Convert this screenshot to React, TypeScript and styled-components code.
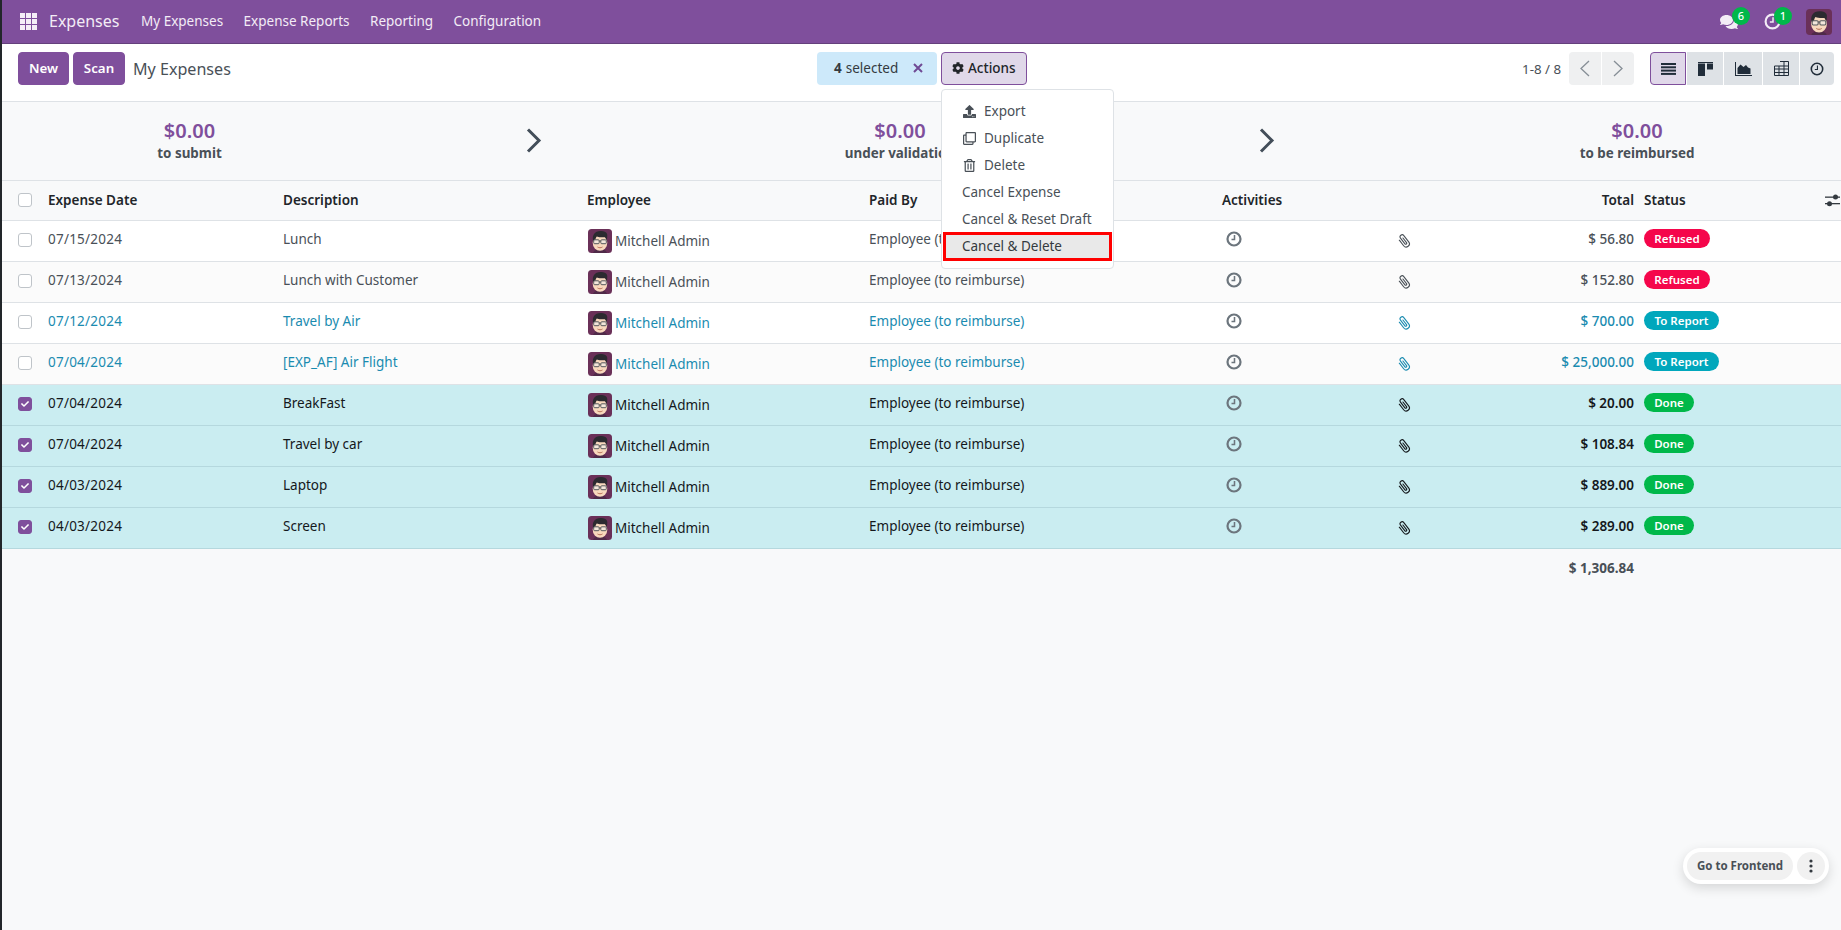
import React from "react";
import styled, { createGlobalStyle } from "styled-components";
import { FaCog, FaUpload, FaRegClone, FaRegTrashAlt, FaComments, FaCheck } from "react-icons/fa";

const Global = createGlobalStyle`
  html, body { margin: 0; padding: 0; background: #22262a; }
  body { font-family: "Noto Sans", "Open Sans", "Liberation Sans", sans-serif; font-size: 13.5px; color: #495057; }
  * { box-sizing: border-box; }
`;

const PURPLE = "#7f4f9c";

const Page = styled.div`
  margin-left: 2px;
  min-height: 930px;
  background: #f8f9fa;
  position: relative;
  overflow: hidden;
`;

const Navbar = styled.header`
  height: 44px;
  background: ${PURPLE};
  border-bottom: 1px solid #64407c;
  display: flex;
  align-items: center;
  padding: 0 9px 0 18px;
  color: #f3ecf6;
`;
const AppsIcon = styled.svg`
  width: 17px;
  height: 17px;
  margin-right: 12px;
  fill: #f5eff8;
`;
const Brand = styled.span`
  font-size: 16px;
  width: 92px;
  padding-bottom: 2px;
`;
const NavItem = styled.span`
  font-size: 13.5px;
  margin-right: 20.5px;
  padding-bottom: 2px;
`;
const NavRight = styled.div`
  margin-left: auto;
  display: flex;
  align-items: center;
`;
const NavIcon = styled.div<{ $w: number }>`
  position: relative;
  width: ${(p) => p.$w}px;
  height: 18px;
  display: flex;
  align-items: center;
  font-size: 18px;
  color: #f3ecf6;
`;
const CountBadge = styled.span<{ $left: number }>`
  position: absolute;
  top: -6px;
  left: ${(p) => p.$left}px;
  width: 18px;
  height: 18px;
  border-radius: 50%;
  background: #00b84a;
  color: #fff;
  font-size: 11px;
  font-weight: 500;
  display: flex;
  align-items: center;
  justify-content: center;
`;

const ControlPanel = styled.div`
  height: 58px;
  background: #fff;
  border-bottom: 1px solid #dee2e6;
  display: flex;
  align-items: flex-start;
  padding: 8px 7px 0 16px;
`;
const LeftGroup = styled.div`
  width: 799px;
  display: flex;
  align-items: center;
`;
const PrimaryButton = styled.button<{ $w: number }>`
  height: 33px;
  width: ${(p) => p.$w}px;
  margin-right: 4px;
  border: 1px solid ${PURPLE};
  border-radius: 4px;
  background: ${PURPLE};
  color: #fff;
  font: 600 13.3px "Noto Sans", sans-serif;
  padding: 0 0 2px;
`;
const PageTitle = styled.span`
  font-size: 16.100px;
  margin-left: 4px;
  color: #495057;
`;
const SelectionBadge = styled.div`
  height: 33px;
  width: 120px;
  background: #cde9fa;
  border-radius: 4px;
  display: flex;
  align-items: center;
  padding: 0 0 2px 17px;
  color: #343a40;
  font-size: 13.5px;
  b { font-weight: 700; margin-right: 4px; }
`;
const CloseMark = styled.svg`
  width: 10px;
  height: 10px;
  margin-left: 15px;
  stroke: #6f4a94;
  stroke-width: 2;
`;
const ActionsWrap = styled.div`
  position: relative;
  margin-left: 4px;
`;
const ActionsButton = styled.button`
  height: 33px;
  width: 86px;
  background: #e0d8e9;
  border: 1px solid ${PURPLE};
  border-radius: 4px;
  color: #212529;
  font: 500 13.5px "Noto Sans", sans-serif;
  display: flex;
  align-items: center;
  gap: 4px;
  padding: 0 0 2px 10px;
`;
const Menu = styled.div`
  position: absolute;
  z-index: 5;
  top: 37px;
  left: 0;
  width: 173px;
  height: 180px;
  background: #fff;
  border: 1px solid #dee2e6;
  border-radius: 4px;
  padding: 7.5px 0;
`;
const MenuItem = styled.div`
  height: 27px;
  display: flex;
  align-items: center;
  gap: 8px;
  font-size: 13.5px;
  color: #495057;
  padding-left: 20px;
  svg { width: 13px; height: 13px; flex: none; margin-left: 1px; }
`;
const HotMenuItem = styled(MenuItem)`
  height: 23px;
  margin: 2px 4px;
  padding-left: 16px;
  color: #343a40;
  background: #e9e9e9;
  outline: 3.5px solid #f00;
`;
const RightGroup = styled.div`
  margin-left: auto;
  display: flex;
  align-items: center;
`;
const PagerText = styled.span`
  font-size: 13.3px;
  margin-right: 8px;
  color: #495057;
`;
const PagerButton = styled.div<{ $first?: boolean }>`
  width: 32px;
  height: 33px;
  background: #eff0f1;
  margin-left: ${(p) => (p.$first ? 0 : "1px")};
  border-radius: ${(p) => (p.$first ? "4px 0 0 4px" : "0 4px 4px 0")};
  display: flex;
  align-items: center;
  justify-content: center;
`;
const ViewSwitch = styled.div`
  display: flex;
  margin-left: 16px;
  gap: 1px;
`;
const ViewButton = styled.div<{ $w: number; $on?: boolean; $end?: boolean }>`
  width: ${(p) => p.$w}px;
  height: 33px;
  background: ${(p) => (p.$on ? "#e0d8e9" : "#dee2e6")};
  border: ${(p) => (p.$on ? `1px solid ${PURPLE}` : "none")};
  border-radius: ${(p) => (p.$on ? "4px 0 0 4px" : p.$end ? "0 4px 4px 0" : "0")};
  display: flex;
  align-items: center;
  justify-content: center;
  color: #212d3a;
`;

const Summary = styled.section`
  height: 79px;
  border-bottom: 1px solid #dee2e6;
  display: grid;
  grid-template-columns: 375px 313px 420px 314px 1fr;
  align-items: center;
`;
const Stat = styled.div<{ $shift?: number }>`
  text-align: center;
  padding-left: ${(p) => p.$shift ?? 0}px;
  padding-bottom: 3px;
`;
const StatValue = styled.div`
  font-size: 20px;
  font-weight: 600;
  line-height: 25px;
  margin-bottom: 1px;
  color: ${PURPLE};
`;
const StatLabel = styled.div`
  font-size: 13.4px;
  font-weight: 700;
  line-height: 18px;
  color: #495057;
`;
const ArrowCell = styled.div`
  display: flex;
  justify-content: center;
  padding-bottom: 1px;
  svg { width: 16px; height: 25px; }
`;

const COLS = "46px 235px 304px 282px 353px 173px 40px 199px 10px 1fr";
const HeaderRow = styled.div`
  height: 40px;
  display: grid;
  grid-template-columns: ${COLS};
  align-items: center;
  border-bottom: 1px solid #dee2e6;
  color: #212529;
  font-weight: 600;
  font-size: 13.5px;
`;
const HeadLabel = styled.span`
  padding-bottom: 2px;
`;
const HeadEnd = styled(HeadLabel)`
  text-align: right;
`;
const Box = styled.span<{ $on?: boolean }>`
  width: 14px;
  height: 14px;
  margin: 0 0 2px 16px;
  border-radius: 3px;
  border: 1px solid ${(p) => (p.$on ? "#7f4f9c" : "#bfc4c9")};
  background: ${(p) => (p.$on ? "#7f4f9c" : "#fff")};
  display: flex;
  align-items: center;
  justify-content: center;
  color: #fff;
  svg { width: 8px; height: 8px; }
`;
const Row = styled.div<{ $tone: string; $even: boolean }>`
  height: 41px;
  display: grid;
  grid-template-columns: ${COLS};
  align-items: center;
  font-size: 13.5px;
  background: ${(p) => (p.$tone === "sel" ? "#caedf1" : p.$even ? "#fbfbfb" : "#fff")};
  border-bottom: 1px solid ${(p) => (p.$tone === "sel" ? "#b5d8de" : "#dee2e6")};
  color: ${(p) => (p.$tone === "sel" ? "#14181c" : p.$tone === "link" ? "#1a8bb0" : "#495057")};
`;
const TextCell = styled.span`
  padding-bottom: 5px;
  white-space: nowrap;
`;
const DateCell = styled(TextCell)`
  letter-spacing: 0.23px;
`;
const TotalCell = styled(TextCell)<{ $strong?: boolean }>`
  text-align: right;
  font-weight: ${(p) => (p.$strong ? 600 : 500)};
`;
const Employee = styled.span`
  display: flex;
  align-items: center;
  gap: 3px;
  padding-left: 1px;
`;
const ActivityCell = styled.span`
  display: flex;
  padding: 0 0 4px 4px;
`;
const ClipCell = styled.span`
  display: flex;
  padding-left: 2px;
`;
const Pill = styled.span<{ $kind: string }>`
  display: inline-flex;
  align-items: center;
  justify-content: center;
  height: 19px;
  margin-bottom: 5px;
  border-radius: 10px;
  color: #fff;
  font-size: 11.5px;
  font-weight: 600;
  vertical-align: middle;
  width: ${(p) => (p.$kind === "Refused" ? 66 : p.$kind === "Done" ? 50 : 75)}px;
  background: ${(p) => (p.$kind === "Refused" ? "#f5064b" : p.$kind === "Done" ? "#00b84a" : "#01a7bc")};
`;
const SliderIcon = styled.svg`
  margin-right: 1px;
  width: 15px;
  height: 13px;
`;
const StatusHead = styled.span`
  display: flex;
  justify-content: space-between;
  align-items: center;
`;
const FooterRow = styled.div`
  display: grid;
  grid-template-columns: ${COLS};
  height: 38px;
  align-items: center;
  font-weight: 700;
  font-size: 13.5px;
  color: #495057;
`;
const FooterTotal = styled.span`
  grid-column: 8;
  text-align: right;
`;

const FloatBar = styled.div`
  position: absolute;
  left: 1681px;
  top: 848px;
  width: 146px;
  height: 36px;
  border-radius: 18px;
  background: #fff;
  box-shadow: 0 4px 12px rgba(0, 0, 0, 0.14);
  display: flex;
  align-items: center;
  padding: 0 4px;
  gap: 4px;
`;
const FloatLabel = styled.span`
  width: 106px;
  height: 28px;
  border-radius: 14px;
  background: #f1f1f1;
  font-size: 11.5px;
  font-weight: 700;
  color: #495057;
  display: flex;
  align-items: center;
  justify-content: center;
  padding-bottom: 2px;
`;
const FloatMore = styled.span`
  width: 28px;
  height: 28px;
  border-radius: 50%;
  background: #f1f1f1;
  display: flex;
  align-items: center;
  justify-content: center;
`;

const Avatar = ({ size = 24 }: { size?: number }) => (
  <svg width={size} height={size} viewBox="0 0 24 24" style={{ flex: "none" }}>
    <rect width="24" height="24" rx="3.500" fill="#6a3058" />
    <path d="M5 24c.5-2.500 3.500-3.500 7-3.500s6.500 1 7 3.500z" fill="#4f2a48" />
    <ellipse cx="12" cy="13.800" rx="7.300" ry="8" fill="#f8d8bd" />
    <path d="M5.200 12C3.800 6.500 6.500 2 12.500 2c3.500 0 6.800 1.300 6.800 4.300 0 1.800-.3 4-.7 5.700-.3-1.800-.8-3-1.600-3.800-3 .3-6 .1-8.200-.8-.8.9-1.400 2.500-1.700 4.600z" fill="#2c2a30" />
    <rect x="5.700" y="10.800" width="5.500" height="3.900" rx="1" fill="#f3e6da" stroke="#55585c" strokeWidth="1" />
    <rect x="12.800" y="10.800" width="5.500" height="3.900" rx="1" fill="#f3e6da" stroke="#55585c" strokeWidth="1" />
    <path d="M11.200 12h1.600" stroke="#55585c" strokeWidth="1" />
    <path d="M9.500 18c1.600 1 3.400 1 5 0" fill="none" stroke="#b0674e" strokeWidth=".9" />
  </svg>
);

const ClockGlyph = ({ size = 16, color = "#6c757d", w = 2.200 }: { size?: number; color?: string; w?: number }) => (
  <svg width={size} height={size} viewBox="0 0 16 16" fill="none" stroke={color} strokeWidth={w}>
    <circle cx="8" cy="8" r="6.500" />
    <path d="M8.500 4v4.500H5.500" strokeWidth={w * 0.7} />
  </svg>
);

const ClipGlyph = () => (
  <svg width="14" height="14" viewBox="0 0 14 14" fill="none" stroke="currentColor" strokeWidth="1.100" strokeLinecap="round">
    <path transform="rotate(-38 7 7)" d="M3.800 3.500v7a3.200 3.200 0 0 0 6.400 0V2.600a2.100 2.100 0 0 0-4.200 0v7.200a1 1 0 0 0 2 0V4" />
  </svg>
);

const Chevron = ({ dir = "r" }: { dir?: "l" | "r" }) => (
  <svg width="12" height="17" viewBox="0 0 12 17" fill="none" stroke="#868e96" strokeWidth="1.300">
    <path d={dir === "r" ? "M2 1l8 7.500L2 16" : "M10 1L2 8.500l8 7.500"} />
  </svg>
);

const BigChevron = () => (
  <svg viewBox="0 0 16 25" fill="none" stroke="#434e59" strokeWidth="3">
    <path d="M2 1.500l11 11-11 11" />
  </svg>
);

const rows = [
  ["07/15/2024", "Lunch", "$ 56.80", "Refused", "plain"],
  ["07/13/2024", "Lunch with Customer", "$ 152.80", "Refused", "plain"],
  ["07/12/2024", "Travel by Air", "$ 700.00", "To Report", "link"],
  ["07/04/2024", "[EXP_AF] Air Flight", "$ 25,000.00", "To Report", "link"],
  ["07/04/2024", "BreakFast", "$ 20.00", "Done", "sel"],
  ["07/04/2024", "Travel by car", "$ 108.84", "Done", "sel"],
  ["04/03/2024", "Laptop", "$ 889.00", "Done", "sel"],
  ["04/03/2024", "Screen", "$ 289.00", "Done", "sel"],
];

export default function App() {
  return (
    <>
      <Global />
      <Page>
        <Navbar>
          <AppsIcon viewBox="0 0 17 17">
            {[0, 6, 12].flatMap((y) =>
              [0, 6, 12].map((x) => <rect key={`${x}-${y}`} x={x} y={y} width="5" height="5" />)
            )}
          </AppsIcon>
          <Brand>Expenses</Brand>
          <NavItem>My Expenses</NavItem>
          <NavItem>Expense Reports</NavItem>
          <NavItem>Reporting</NavItem>
          <NavItem>Configuration</NavItem>
          <NavRight>
            <NavIcon $w={44}>
              <FaComments />
              <CountBadge $left={12}>6</CountBadge>
            </NavIcon>
            <NavIcon $w={42}>
              <ClockGlyph size={17} color="#f3ecf6" w={2} />
              <CountBadge $left={10}>1</CountBadge>
            </NavIcon>
            <Avatar size={26} />
          </NavRight>
        </Navbar>

        <ControlPanel>
          <LeftGroup>
            <PrimaryButton $w={51}>New</PrimaryButton>
            <PrimaryButton $w={52}>Scan</PrimaryButton>
            <PageTitle>My Expenses</PageTitle>
          </LeftGroup>
          <SelectionBadge>
            <b>4</b> selected
            <CloseMark viewBox="0 0 10 10">
              <path d="M1 1l8 8M9 1L1 9" />
            </CloseMark>
          </SelectionBadge>
          <ActionsWrap>
            <ActionsButton>
              <FaCog size={12} />
              Actions
            </ActionsButton>
            <Menu>
              <MenuItem>
                <FaUpload />
                Export
              </MenuItem>
              <MenuItem>
                <FaRegClone />
                Duplicate
              </MenuItem>
              <MenuItem>
                <FaRegTrashAlt />
                Delete
              </MenuItem>
              <MenuItem>Cancel Expense</MenuItem>
              <MenuItem>Cancel &amp; Reset Draft</MenuItem>
              <HotMenuItem>Cancel &amp; Delete</HotMenuItem>
            </Menu>
          </ActionsWrap>
          <RightGroup>
            <PagerText>1-8 / 8</PagerText>
            <PagerButton $first>
              <Chevron dir="l" />
            </PagerButton>
            <PagerButton>
              <Chevron />
            </PagerButton>
            <ViewSwitch>
              <ViewButton $w={36} $on>
                <svg width="15" height="12" viewBox="0 0 15 12" fill="#212d3a">
                  <rect y="0" width="15" height="2" />
                  <rect y="3.300" width="15" height="2" />
                  <rect y="6.600" width="15" height="2" />
                  <rect y="9.900" width="15" height="2" />
                </svg>
              </ViewButton>
              <ViewButton $w={36}>
                <svg width="15" height="14" viewBox="0 0 15 14" fill="#212d3a">
                  <rect width="15" height="1" />
                  <rect y="1.500" width="7" height="12.500" />
                  <rect x="9" y="1.500" width="6" height="6" />
                </svg>
              </ViewButton>
              <ViewButton $w={38}>
                <svg width="17" height="14" viewBox="0 0 17 14" fill="#212d3a">
                  <path d="M0 0h1v13h16v1H0z" />
                  <path d="M2.500 12V6l3-3.500 3 2.500 2.500-2 2 2.500 2.500 1V12z" />
                </svg>
              </ViewButton>
              <ViewButton $w={36}>
                <svg width="15" height="15" viewBox="0 0 15 15" fill="none" stroke="#212d3a" strokeWidth="1">
                  <path d="M6 .500h8.500v14H.500V5H14.500M.500 8H14.500M.500 11.500H14.500M5 5v9.500M10 .500v14" />
                </svg>
              </ViewButton>
              <ViewButton $w={34} $end>
                <ClockGlyph size={14} color="#212d3a" w={1.800} />
              </ViewButton>
            </ViewSwitch>
          </RightGroup>
        </ControlPanel>

        <Summary>
          <Stat>
            <StatValue>$0.00</StatValue>
            <StatLabel>to submit</StatLabel>
          </Stat>
          <ArrowCell>
            <BigChevron />
          </ArrowCell>
          <Stat>
            <StatValue>$0.00</StatValue>
            <StatLabel>under validation</StatLabel>
          </Stat>
          <ArrowCell>
            <BigChevron />
          </ArrowCell>
          <Stat $shift={9}>
            <StatValue>$0.00</StatValue>
            <StatLabel>to be reimbursed</StatLabel>
          </Stat>
        </Summary>

        <HeaderRow>
          <Box />
          <HeadLabel>Expense Date</HeadLabel>
          <HeadLabel>Description</HeadLabel>
          <HeadLabel>Employee</HeadLabel>
          <HeadLabel>Paid By</HeadLabel>
          <HeadLabel>Activities</HeadLabel>
          <span />
          <HeadEnd>Total</HeadEnd>
          <span />
          <StatusHead>
            <HeadLabel>Status</HeadLabel>
            <SliderIcon viewBox="0 0 15 13" fill="#343a40">
              <rect y="2.500" width="15" height="1.300" />
              <rect y="9" width="15" height="1.300" />
              <circle cx="10.500" cy="3" r="2.500" />
              <circle cx="4.500" cy="9.700" r="2.500" />
            </SliderIcon>
          </StatusHead>
        </HeaderRow>

        {rows.map(([date, desc, total, status, tone], i) => (
          <Row key={i} $tone={tone} $even={i % 2 === 1}>
            <Box $on={tone === "sel"}>{tone === "sel" && <FaCheck />}</Box>
            <DateCell>{date}</DateCell>
            <TextCell>{desc}</TextCell>
            <Employee>
              <Avatar />
              Mitchell Admin
            </Employee>
            <TextCell>Employee (to reimburse)</TextCell>
            <ActivityCell>
              <ClockGlyph />
            </ActivityCell>
            <ClipCell>
              <ClipGlyph />
            </ClipCell>
            <TotalCell $strong={tone === "sel"}>{total}</TotalCell>
            <span />
            <span>
              <Pill $kind={status}>{status}</Pill>
            </span>
          </Row>
        ))}

        <FooterRow>
          <FooterTotal>$ 1,306.84</FooterTotal>
        </FooterRow>

        <FloatBar>
          <FloatLabel>Go to Frontend</FloatLabel>
          <FloatMore>
            <svg width="4" height="14" viewBox="0 0 4 14" fill="#343a40">
              <circle cx="2" cy="2" r="1.600" />
              <circle cx="2" cy="7" r="1.600" />
              <circle cx="2" cy="12" r="1.600" />
            </svg>
          </FloatMore>
        </FloatBar>
      </Page>
    </>
  );
}
